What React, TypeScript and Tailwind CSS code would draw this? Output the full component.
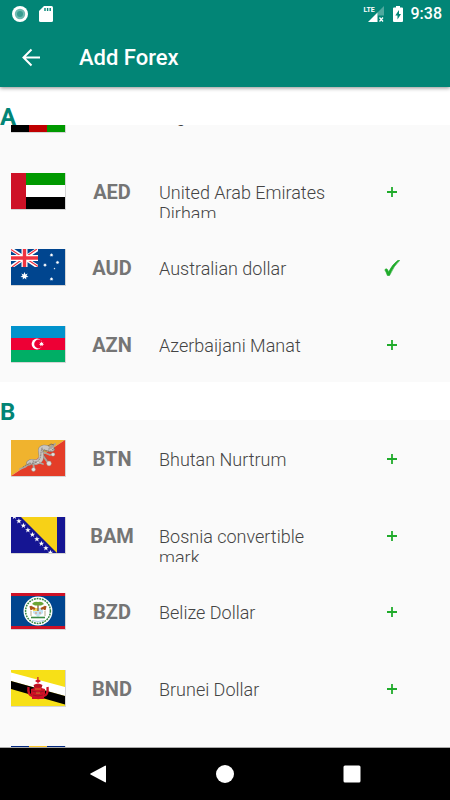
import React from "react";

type Currency = {
  code: string;
  name: string;
  flag: React.ReactNode;
  added?: boolean;
};

const STAR = "M0 -1L.25 -.4L.8 -.6L.5 -.1L1 .25L.4 .3L.45 .9L0 .5L-.45 .9L-.4 .3L-1 .25L-.5 -.1L-.8 -.6L-.25 -.4Z";
const STAR5 = "M0 -1L.24 -.31L.95 -.31L.38 .12L.59 .81L0 .38L-.59 .81L-.38 .12L-.95 -.31L-.24 -.31Z";

const Flag = ({ children }: { children: React.ReactNode }) => (
  <svg viewBox="0 0 54 36" className="h-9 w-[54px] shrink-0" aria-hidden="true">
    {children}
  </svg>
);

const Afghanistan = (
  <Flag>
    <path fill="#000" d="M0 0h18v36H0z" />
    <path fill="#bf0000" d="M18 0h18v36H18z" />
    <path fill="#009900" d="M36 0h18v36H36z" />
  </Flag>
);

const Emirates = (
  <Flag>
    <path fill="#009900" d="M0 0h54v12H0z" />
    <path fill="#fff" d="M0 12h54v12H0z" />
    <path fill="#000" d="M0 24h54v12H0z" />
    <path fill="#ce1126" d="M0 0h15v36H0z" />
  </Flag>
);

const Australia = (
  <Flag>
    <path fill="#00458f" d="M0 0h54v36H0z" />
    <svg width="27" height="18" viewBox="0 0 27 18">
      <path stroke="#fff" strokeWidth="3.6" d="M0 0L27 18M27 0L0 18" />
      <path stroke="#ef3340" strokeWidth="1.2" d="M0 .6L13 9M27 17.4L14 9M26 0L13 9M1 18L13 9" />
      <path stroke="#fff" strokeWidth="6" d="M13.5 0v18M0 9h27" />
      <path stroke="#ef3340" strokeWidth="3.4" d="M13.5 0v18M0 9h27" />
    </svg>
    <g fill="#fff">
      <path d={STAR} transform="translate(13.5 27) scale(4)" />
      <path d={STAR} transform="translate(40.5 6) scale(2)" />
      <path d={STAR} transform="translate(34 16) scale(2)" />
      <path d={STAR} transform="translate(46.5 13.5) scale(2)" />
      <path d={STAR} transform="translate(40.5 30) scale(2)" />
      <path d={STAR5} transform="translate(43.5 19.5) scale(1.1)" />
    </g>
  </Flag>
);

const Azerbaijan = (
  <Flag>
    <path fill="#0092cc" d="M0 0h54v12H0z" />
    <path fill="#ed0035" d="M0 12h54v12H0z" />
    <path fill="#00ae65" d="M0 24h54v12H0z" />
    <circle cx="26" cy="18" r="5.4" fill="#fff" />
    <circle cx="27.6" cy="18" r="4.4" fill="#ed0035" />
    <path fill="#fff" d={STAR} transform="translate(30.5 18) scale(2.6)" />
  </Flag>
);

const Bhutan = (
  <Flag>
    <path fill="#f0b32e" d="M0 0h54L0 36z" />
    <path fill="#e43d28" d="M54 0v36H0z" />
    <g fill="none" strokeLinecap="round" strokeLinejoin="round">
      <path stroke="#8f867c" strokeWidth="5.4" d="M18 23C21 20 22 23 26 22S31 17 30 13S30 8 33 7.5S39 10 41 9" />
      <path stroke="#c9c6c2" strokeWidth="4.4" d="M18 23C21 20 22 23 26 22S31 17 30 13S30 8 33 7.5S39 10 41 9" />
      <path stroke="#aaa49d" strokeWidth="1.8" d="M9 29l5-2l5-4M22 23l1 5M26 22l6 2M33 17l4 6M32 12l7 3l4-1M38 9l3-4M40 8l4-4" />
      <path stroke="#776f69" strokeWidth=".8" strokeDasharray="1 1.5" d="M12 27C18 22 23 25 27 21S29 14 31 8M32 11l8 0M33 15l5 6M22 21l5 2M31 9l5 2" />
    </g>
    <g fill="#e1e0de" stroke="#8f867c" strokeWidth=".4">
      <circle cx="22.5" cy="29.5" r="2" />
      <circle cx="38" cy="23.5" r="2.4" />
      <circle cx="42" cy="14.5" r="1.8" />
      <circle cx="27" cy="22.5" r="1.3" />
    </g>
    <path stroke="#6d625c" fill="none" strokeWidth=".8" d="M37 6l3-2l3 1M41 10l3-2" />
  </Flag>
);

const Bosnia = (
  <Flag>
    <path fill="#151593" d="M0 0h54v36H0z" />
    <path fill="#f7d117" d="M10 0h36v36z" />
    {[0, 1, 2, 3, 4, 5, 6, 7, 8].map((i) => (
      <path key={i} fill="#fff" d={STAR5} transform={`translate(${3.4 + i * 4.5} ${-0.4 + i * 4.5}) scale(2.9)`} />
    ))}
  </Flag>
);

const Belize = (
  <Flag>
    <path fill="#00458f" d="M0 0h54v36H0z" />
    <path fill="#ce1126" d="M0 0h54v3H0zM0 33h54v3H0z" />
    <circle cx="27" cy="18" r="14.5" fill="#fff" />
    <circle cx="27" cy="18" r="12.4" fill="none" stroke="#32853d" strokeWidth="1.5" strokeDasharray="1.8 .9" />
    <path fill="#c4e4f3" d="M22 15h10v5l-5 4l-5-4z" />
    <path fill="#f6d657" d="M22 15h5v3h-5z" />
    <path stroke="#79512d" strokeWidth="1.2" d="M27 10v8" />
    <path fill="#6aa536" d="M21 11q2-3 6-2q4-1 6 2l-3 1.5h-6z" />
    <path stroke="#a95419" strokeWidth="2.2" d="M19.5 13l1 4M34.5 13l-1 4M20 14l4 2M34 14l-4 2" />
    <path stroke="#b5a98a" strokeWidth="1" d="M20 18v5M34 18v5" />
    <path stroke="#3b8c43" strokeWidth="1.6" d="M20 24.5h14" />
    <path fill="none" stroke="#a9cfe4" d="M21 27.5q6 2 12 0" />
    <path stroke="#e08a6d" d="M24 20h2M28 20h2" />
  </Flag>
);

const Brunei = (
  <Flag>
    <path fill="#f7e017" d="M0 0h54v36H0z" />
    <path fill="#fff" d="M0 2.5L54 17v9L0 11z" />
    <path fill="#000" d="M0 11L54 26v8.5L0 19z" />
    <g fill="#cf1126">
      <path d="M26.3 7h1.2v4h-1.2zM24 11q3-3 6 0l-3 2zM22.5 15q4.5-3 9 0l-1 3h-7z" />
      <path d="M20 19q7-3 14 0v5q-3 4-7 4t-7-4zM21 27l6-2l6 2v2H21z" />
    </g>
    <path fill="none" stroke="#cf1126" strokeWidth="2.4" d="M17.5 17q-1 8 4 9q6 4 11 0q5-1 4-9" />
    <path fill="none" stroke="#7b1c20" strokeWidth=".7" d="M23 16h8M21 21q6 3 12 0M22 25q5 2 10 0" />
    <path fill="none" stroke="#e3a52b" strokeWidth=".7" d="M24 19h6M25 23h4" />
  </Flag>
);

const Barbados = (
  <Flag>
    <path fill="#00267f" d="M0 0h18v36H0z" />
    <path fill="#ffc726" d="M18 0h18v36H18z" />
    <path fill="#00267f" d="M36 0h18v36H36z" />
  </Flag>
);

const listA: Currency[] = [
  { code: "AFN", name: "Afghani", flag: Afghanistan },
  { code: "AED", name: "United Arab Emirates Dirham", flag: Emirates },
  { code: "AUD", name: "Australian dollar", flag: Australia, added: true },
  { code: "AZN", name: "Azerbaijani Manat", flag: Azerbaijan },
];

const listB: Currency[] = [
  { code: "BTN", name: "Bhutan Nurtrum", flag: Bhutan },
  { code: "BAM", name: "Bosnia convertible mark", flag: Bosnia },
  { code: "BZD", name: "Belize Dollar", flag: Belize },
  { code: "BND", name: "Brunei Dollar", flag: Brunei },
  { code: "BBD", name: "Barbados Dollar", flag: Barbados },
];

const StatusBar = () => (
  <div className="flex h-7 items-center justify-between pl-3 pr-2">
    <div className="flex items-center gap-[11px]">
      <svg viewBox="0 0 16 16" className="size-4">
        <circle cx="8" cy="8" r="8" fill="#fff" />
        <circle cx="8" cy="8" r="5.2" fill="#6fbab1" />
        <circle cx="8" cy="8" r="3" fill="#389c90" />
      </svg>
      <svg viewBox="0 0 14 16" className="h-4 w-3.5">
        <path fill="#fff" d="M5 0h7.5Q14 0 14 1.5v13q0 1.5-1.5 1.5h-11Q0 16 0 14.5V5z" />
        <path stroke="#028576" strokeWidth="1.4" d="M6 2v3M8.6 2v3M11.2 2v3" />
      </svg>
    </div>
    <div className="flex items-center text-white">
      <div className="relative h-4 w-5">
        <span className="absolute left-0 top-0 text-[7px] font-bold leading-[8px]">LTE</span>
        <svg viewBox="0 0 20 16" className="h-4 w-5">
          <path fill="#4fa99e" d="M20 0v9.5h-6.5V6.5z" />
          <path fill="#fff" d="M13.5 6.5V16H4z" />
          <path stroke="#fff" strokeWidth="1.3" d="M15.5 11.5l3.5 4M19 11.5l-3.5 4" />
        </svg>
      </div>
      <svg viewBox="0 0 10 16" className="ml-[9px] h-4 w-2.5">
        <path fill="#fff" d="M3 0h4v1.5h2q1 0 1 1V15q0 1-1 1H1q-1 0-1-1V2.5q0-1 1-1h2z" />
        <path fill="#028576" d="M6 4L2.3 9.5h2.2V13.5L8 8H6z" />
      </svg>
      <span className="ml-2 text-base font-medium leading-5">9:38</span>
    </div>
  </div>
);

const CurrencyRow = ({ code, name, flag, added }: Currency) => (
  <li className="flex items-start pl-[11px] pr-8">
    <div className="mt-5 border-r border-b border-[#d5d5d5]">{flag}</div>
    <p className="mt-[27px] w-[92px] text-center text-xl font-bold leading-6 text-[#757575]">{code}</p>
    <p className="mt-[29px] ml-px h-9 w-[180px] overflow-hidden text-lg font-light leading-[21px] text-[#444]">{name}</p>
    <button
      type="button"
      aria-label={added ? `Remove ${code}` : `Add ${code}`}
      className="mt-[26px] ml-auto flex h-[26px] w-[52px] items-center justify-center"
    >
      {added ? (
        <svg viewBox="0 0 16 16" className="size-4">
          <path fill="#20ab2b" stroke="#20ab2b" strokeWidth=".6" d="M.8 9.8Q1.8 8.5 3 9Q4 9.8 4.5 12Q8.5 4 14 .3L15.8 .3Q10 5.5 5.6 15.4Q4.7 16 3.4 15.6Q2.2 12 .8 9.8z" />
        </svg>
      ) : (
        <svg viewBox="0 0 10 10" className="size-2.5">
          <path stroke="#20ab2b" strokeWidth="1.8" d="M5 0v10M0 5h10" />
        </svg>
      )}
    </button>
  </li>
);

const SectionTitle = ({ children }: { children: React.ReactNode }) => (
  <h2 className="flex h-[38px] shrink-0 items-end overflow-hidden bg-white text-2xl font-bold leading-4 text-[#028576]">
    {children}
  </h2>
);

const App = () => {
  return (
    <div className="flex h-screen flex-col overflow-hidden bg-white font-[Roboto,sans-serif]">
      <header className="z-10 shrink-0 bg-[#028576] shadow-[0_1px_4px_rgba(0,0,0,0.45)]">
        <StatusBar />
        <div className="flex h-[59px] items-center pl-[21px]">
          <button type="button" aria-label="Back">
            <svg viewBox="0 0 20 20" className="size-5" fill="none" stroke="#fff" strokeWidth="2">
              <path d="M19 9.5H2.5M10.5 1.5L2.5 9.5l8 8" />
            </svg>
          </button>
          <h1 className="ml-[38px] text-[22px] font-medium leading-7 text-white">Add Forex</h1>
        </div>
      </header>

      <main className="min-h-0 flex-1 overflow-hidden border-b border-[#a9a9a9]">
        <SectionTitle>A</SectionTitle>
        <div className="flex h-[257px] flex-col justify-end overflow-hidden bg-[#fafafa]">
          <ul className="grid h-[306px] shrink-0 grid-rows-4">
            {listA.map((c) => (
              <CurrencyRow key={c.code} {...c} />
            ))}
          </ul>
        </div>
        <SectionTitle>B</SectionTitle>
        <ul className="grid h-[383px] grid-rows-5 bg-[#fafafa]">
          {listB.map((c) => (
            <CurrencyRow key={c.code} {...c} />
          ))}
        </ul>
      </main>

      <nav className="flex h-[52px] shrink-0 items-center justify-center gap-[109px] bg-black">
        <button type="button" aria-label="Navigate back">
          <svg viewBox="0 0 18 18" className="size-[18px]">
            <path fill="#fff" d="M17 1v16q-.2 .6-1 .3L1.5 9.6q-.8-.6 0-1.2L16 .7q.8-.3 1 .3z" />
          </svg>
        </button>
        <button type="button" aria-label="Home">
          <svg viewBox="0 0 18 18" className="size-[18px]">
            <circle cx="9" cy="9" r="9" fill="#fff" />
          </svg>
        </button>
        <button type="button" aria-label="Recent apps">
          <svg viewBox="0 0 18 18" className="size-[18px]">
            <rect x=".5" y=".5" width="17" height="17" rx="1.5" fill="#fff" />
          </svg>
        </button>
      </nav>
    </div>
  );
};

export default App;
